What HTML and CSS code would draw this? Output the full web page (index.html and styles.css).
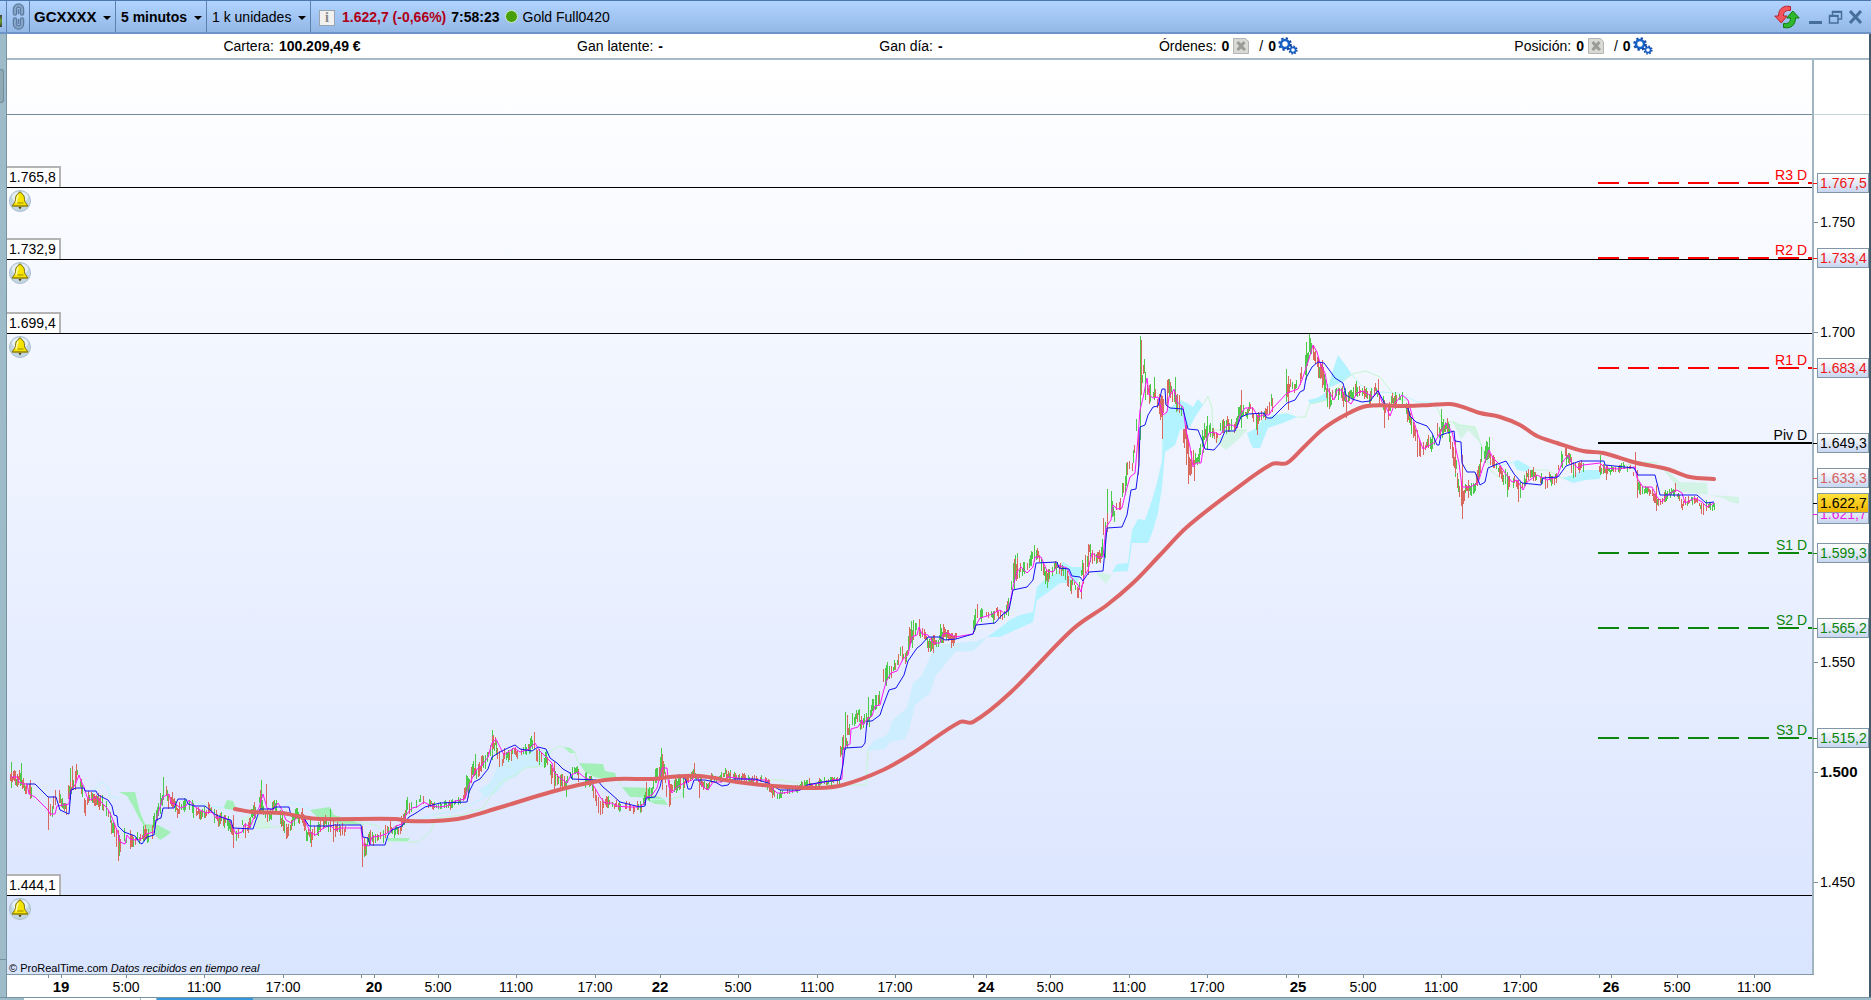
FILE: index.html
```html
<!DOCTYPE html>
<html lang="es">
<head>
    <meta charset="UTF-8">
    <meta name="viewport" content="width=device-width, initial-scale=1.0">
    <title>GCXXXX - 5 minutos</title>
    <link rel="stylesheet" href="styles.css">
</head>
<body>
    <svg class="defs" aria-hidden="true">
        <symbol id="icon-bell" viewBox="0 0 22 22">
            <circle cx="11" cy="11" r="10.5" fill="#c3d6e2" stroke="#a9bfcd"/>
            <ellipse cx="11" cy="7" rx="8" ry="5.500" fill="#e6f0f6"/>
            <path d="M9.500 3.500a1.500 1.500 0 0 1 3 0c2.500 1 3 3.500 3 6 0 2.500 1.500 3.500 3.500 6.500H3c2-3 3.500-4 3.500-6.500 0-2.500.5-5 3-6z" fill="#f5e400" stroke="#7a6b08"/>
            <path d="M9.500 5c-1.500 1.500-1.500 5-2.500 8" fill="none" stroke="#fffcae" stroke-width="1.500"/>
            <path d="M8.500 13h6M3.500 16h15" stroke="#a08c00"/>
            <path d="M9.500 17h3l-1.500 2.500z" fill="#4b3f00"/>
        </symbol>
        <symbol id="icon-cancel" viewBox="0 0 16 16">
            <path d="M.5.5h12l3 3v12H.5z" fill="#d9d9d5" stroke="#b4b4b0"/>
            <path d="M3.500 5l2-2L8 5.500 10.500 3l2 2L10 8l3 3-2 2-3-2.500L5.500 13l-2-2L6 8z" fill="#9b9b98"/>
        </symbol>
        <symbol id="icon-gears" viewBox="0 0 20 18">
            <circle cx="7" cy="7" r="4" fill="none" stroke="#1764c8" stroke-width="2.600"/>
            <circle cx="7" cy="7" r="5.800" fill="none" stroke="#0d47a8" stroke-width="2" stroke-dasharray="2.280 2.280"/>
            <circle cx="15" cy="13" r="2.600" fill="none" stroke="#1764c8" stroke-width="1.600"/>
            <circle cx="15" cy="13" r="3.900" fill="none" stroke="#0b3c9c" stroke-width="1.400" stroke-dasharray="1.530 1.530"/>
        </symbol>
    </svg>

    <header class="titlebar">
        <span class="dock-mark"></span>
        <button class="link-button" aria-label="Vincular ventana">
            <svg width="15" height="27" viewBox="0 0 15 27" fill="none" stroke-linecap="round">
                <path d="M4 10.500V6a3.500 3.500 0 0 1 7 0v4.500M4 16.500V21a3.500 3.500 0 0 0 7 0v-4.500" stroke="#5d7da0" stroke-width="4.500"/>
                <path d="M4 10.500V6a3.500 3.500 0 0 1 7 0v4.500M4 16.500V21a3.500 3.500 0 0 0 7 0v-4.500" stroke="#86a5c8" stroke-width="2"/>
                <path d="M7.500 6.500v4M7.500 16.500v4" stroke="#5d7da0" stroke-width="1.500"/>
            </svg>
        </button>
        <span class="drop drop-symbol"><select aria-label="Valor"><option>GCXXXX</option></select></span>
        <span class="drop drop-bold"><select aria-label="Periodo"><option>5 minutos</option></select></span>
        <span class="drop"><select aria-label="Unidades"><option>1 k unidades</option></select></span>
        <div class="quote">
            <button class="info-button" aria-label="Información">i</button>
            <b class="quote-price">1.622,7 (-0,66%)</b>
            <b>7:58:23</b>
            <span class="status-dot"></span>
            <span>Gold Full0420</span>
        </div>
        <div class="window-buttons">
            <button aria-label="Actualizar">
                <svg width="26" height="24" viewBox="0 0 26 24">
                    <path d="M16.500 1.500C9 0 4.500 4 4.500 11H.8l6.400 7 6-7H9.500c0-4 2-6 7-5.500z" fill="#f4555c" stroke="#b8232e"/>
                    <path d="M9.500 22.500c7.500 1.500 12-2.500 12-9.500h3.700l-6.400-7-6 7h3.700c0 4-2 6-7 5.500z" fill="#2db92b" stroke="#11780f"/>
                </svg>
            </button>
            <button aria-label="Minimizar">
                <svg width="15" height="16" viewBox="0 0 15 16"><path d="M1 13.500h13" stroke="#476f9c" stroke-width="3"/></svg>
            </button>
            <button aria-label="Restaurar">
                <svg width="15" height="16" viewBox="0 0 15 16" fill="none" stroke="#476f9c">
                    <path d="M4.500 6V2.500h9V10H10" stroke-width="1.500"/><path d="M4 3h10" stroke-width="2"/>
                    <path d="M1.500 6.500H10V14H1.500z" stroke-width="1.500"/><path d="M1 7h9" stroke-width="2"/>
                </svg>
            </button>
            <button aria-label="Cerrar">
                <svg width="15" height="16" viewBox="0 0 15 16"><path d="M2 2l11 12M13 2L2 14" stroke="#476f9c" stroke-width="3"/></svg>
            </button>
        </div>
    </header>

    <div class="desktop">
        <aside class="dock"><span class="dock-tab"></span><span class="dock-foot"></span></aside>
        <main class="window">
            <section class="account">
                <div>Cartera: <b>100.209,49 €</b></div>
                <div>Gan latente: <b>-</b></div>
                <div>Gan día: <b>-</b></div>
                <div class="orders">
                    Órdenes: <b>0</b>
                    <button aria-label="Cancelar órdenes"><svg width="16" height="16"><use href="#icon-cancel"/></svg></button>
                    <span class="orders-auto">/ <b>0</b></span>
                    <button aria-label="Sistemas automáticos"><svg width="20" height="18"><use href="#icon-gears"/></svg></button>
                </div>
                <div class="orders">
                    Posición: <b>0</b>
                    <button aria-label="Cerrar posición"><svg width="16" height="16"><use href="#icon-cancel"/></svg></button>
                    <span class="orders-auto">/ <b>0</b></span>
                    <button aria-label="Sistemas en posición"><svg width="20" height="18"><use href="#icon-gears"/></svg></button>
                </div>
            </section>

            <section class="chart">
                <div class="plot" id="plot">
                    <svg class="series" id="series" viewBox="7 60 1805 914" preserveAspectRatio="none" role="img" aria-label="Gráfico de precios"></svg>
                    <p class="credits">© ProRealTime.com <i>Datos recibidos en tiempo real</i></p>
                </div>
                <div class="price-axis" id="priceAxis"></div>
                <div class="time-axis" id="timeAxis"></div>
            </section>
        </main>
    </div>
    <footer class="taskbar"><span class="task task-wide"></span><span class="task"></span><span class="task task-active"></span></footer>

    <script src="chart.js"></script>
</body>
</html>
```
FILE: styles.css
```css
* {
    box-sizing: border-box;
}
body {
    margin: 0;
    min-height: 100vh;
    display: flex;
    flex-direction: column;
    font-family: "Liberation Sans", Arial, sans-serif;
    font-size: 14px;
    color: #000;
    background: #9dbbc8;
}
button, select {
    font: inherit;
    color: inherit;
    border: 0;
    padding: 0;
    background: none;
    cursor: pointer;
}
svg {
    display: block;
}
.defs {
    position: absolute;
    width: 0;
    height: 0;
}

/* title bar */
.titlebar {
    height: 34px;
    display: flex;
    align-items: stretch;
    border-top: 1px solid #4d76aa;
    border-bottom: 2px solid #6d93c8;
    background: linear-gradient(#b0d3ff, #94b8e6);
}
.dock-mark {
    width: 7px;
    border-right: 1px solid #5c80b0;
    background: linear-gradient(#3c3c3c, #6fa22c 50%, #3c3c3c) no-repeat 0 14px / 2px 12px;
}
.link-button {
    width: 23px;
    padding-left: 4px;
    border-right: 1px solid #5c80b0;
}
.drop {
    position: relative;
    display: flex;
    border-right: 1px solid #5c80b0;
}
.drop select {
    appearance: none;
    padding: 0 18px 0 5px;
}
.drop::after {
    content: "";
    position: absolute;
    right: 4px;
    top: 15px;
    border: 4px solid transparent;
    border-top-color: #000;
    border-bottom: 0;
    pointer-events: none;
}
.drop-symbol select {
    font-size: 15px;
    padding-left: 4px;
}
.drop-symbol select,
.drop-bold select {
    font-weight: bold;
}
.quote {
    display: flex;
    align-items: center;
    gap: 5px;
    padding: 0 0 0 8px;
}
.quote-price {
    color: #b00018;
}
.info-button {
    width: 16px;
    height: 16px;
    margin: 2px 2px 0 0;
    border: 1px solid #9aa4ae;
    background: #f1f1ef;
    color: #85888c;
    font: bold 14px/14px "Liberation Serif", serif;
}
.status-dot {
    width: 13px;
    height: 13px;
    border: 1px solid #d7ecc8;
    border-radius: 50%;
    background: #48a008;
}
.window-buttons {
    display: flex;
    align-items: center;
    gap: 5px;
    margin-left: auto;
    padding: 0 8px 0 0;
}
.window-buttons button:first-child {
    margin-right: 3px;
}

/* body of the desktop */
.desktop {
    flex: 1;
    display: flex;
}
.dock {
    width: 7px;
    display: flex;
    flex-direction: column;
    border-right: 1px solid #7693a2;
}
.dock-tab {
    width: 4px;
    height: 34px;
    margin-top: 35px;
    border: 1px solid #6f8d9c;
    border-left: 0;
    border-radius: 0 3px 3px 0;
    background: #8fa9b5;
}
.dock-foot {
    height: 38px;
    margin-top: auto;
    border-top: 1px solid #7693a2;
}
.window {
    flex: 1;
    display: flex;
    flex-direction: column;
    border-right: 2px solid #425a69;
    background: #fff;
}
.account {
    height: 26px;
    display: flex;
    justify-content: space-evenly;
    align-items: center;
    padding-bottom: 1px;
    border-bottom: 2px solid #a7bbc7;
    background: #fff;
}
.account b {
    margin-left: 1px;
}
.orders {
    display: flex;
    align-items: center;
    gap: 4px;
}
.orders-auto {
    margin-left: 6px;
}
.orders-auto + button {
    margin-left: -2px;
}

/* chart */
.chart {
    flex: 1;
    display: grid;
    grid-template-columns: 1fr 55px;
    grid-template-rows: 1fr 23px;
}
.plot {
    position: relative;
    border-right: 2px solid #a2b4bf;
    background: linear-gradient(#fff, #d9e4ff);
}
.series {
    position: absolute;
    inset: 0;
    width: 100%;
    height: 100%;
}
.candles {
    stroke-width: 1;
    fill: none;
    shape-rendering: crispEdges;
}
.candles-up {
    stroke: #4cca4c;
}
.candles-down {
    stroke: #d9695f;
}
.line {
    fill: none;
    stroke-linejoin: round;
}
.line-fast {
    stroke: #ff14f5;
}
.line-base {
    stroke: #1414f0;
}
.line-average {
    stroke: #dd6464;
    stroke-width: 4;
    stroke-linecap: round;
}
.line-span-a {
    stroke: #bdf6fb;
}
.line-span-b {
    stroke: #c4f6cf;
}
.cloud-cyan {
    fill: #b2f3ff;
}
.cloud-sky {
    fill: #cdeeff;
}
.cloud-green {
    fill: #a2efb8;
}
.cloud-pale {
    fill: #d2f3e6;
}
.panel-line {
    stroke: #758c9b;
}
.alert {
    position: absolute;
    left: 0;
    right: 0;
    border-top: 1px solid #000;
}
.alert-price {
    position: absolute;
    left: 0;
    bottom: 1px;
    padding: 1px 3px 1px 2px;
    line-height: 17px;
    border-top: 2px solid #b4b4b4;
    border-right: 2px solid #b4b4b4;
    background: #fff;
}
.alert-bell {
    position: absolute;
    left: 2px;
    top: 2px;
}
.pivot {
    position: absolute;
    left: 88.140%;
    right: 0;
    height: 2px;
    margin-top: -1px;
    color: #000;
    background: currentColor;
}
.pivot-label {
    position: absolute;
    right: 5px;
    bottom: 1px;
    line-height: 16px;
}
.pivot-r {
    color: #f00;
}
.pivot-s {
    color: #0a860a;
}
.pivot-r,
.pivot-s {
    background: repeating-linear-gradient(90deg, currentColor 0 21px, transparent 21px 30px);
}
.credits {
    position: absolute;
    left: 2px;
    bottom: 0;
    margin: 0;
    font-size: 11px;
    line-height: 11px;
}
.price-axis {
    position: relative;
    background: linear-gradient(#c5d6de, #c5d6de) no-repeat 0 54px / 100% 1px;
}
.price-tick,
.price-tag {
    position: absolute;
    left: 3px;
    transform: translateY(-50%);
    line-height: 18px;
}
.price-tick::before,
.price-tag::before {
    content: "";
    position: absolute;
    left: -3px;
    top: 50%;
    width: 4px;
    border-top: 1px solid #758c9b;
}
.price-tick {
    padding-left: 3px;
}
.price-tick-major {
    font-size: 15px;
    font-weight: bold;
}
.price-tag {
    right: 0;
    padding-left: 2px;
    border: 1px solid #8197a5;
    background: linear-gradient(#fff, #c8d6f0);
}
.price-tag::before {
    left: -5px;
    border-top-color: currentColor;
}
.tag-r {
    color: #f01414;
}
.tag-s {
    color: #0a860a;
}
.tag-average {
    color: #d96060;
}
.tag-fast {
    color: #f01be6;
}
.tag-last {
    background: linear-gradient(#ffe23c, #f0b400);
}
.time-axis {
    position: relative;
    border-top: 1px solid #8299a5;
}
.time-tick {
    position: absolute;
    top: 0;
    height: 3px;
    border-left: 1px solid #758c9b;
}
.time-label {
    position: absolute;
    top: 4px;
    line-height: 16px;
    transform: translateX(-50%);
}
.time-label-day {
    font-size: 15px;
    font-weight: bold;
}

/* strip of the task bar that shows below the window */
.taskbar {
    height: 3px;
    display: flex;
    gap: 1px;
    padding-left: 24px;
    border-top: 1px solid #7693a2;
}
.task {
    width: 15px;
    background: #fff;
}
.task-wide {
    width: 116px;
}
.task-active {
    width: 96px;
    background: #3598dc;
}
```
FILE: chart.js
```js
const SVG_NS = 'http://www.w3.org/2000/svg';
const TOP_PRICE = 1823.5;   // price at the upper edge of the plot
const PRICE_RANGE = 415.45; // price units from top to bottom

const FAST = '11,777 17,777 19,782 24,784 27,784 29,794 35,797 41,803 48,810 50,814 55,814 57,806 69,804 70,793 73,788 76,783 79,775 81,781 84,787 87,797 91,800 95,797 99,800 107,808 110,813 115,825 118,833 120,842 125,844 127,835 130,839 135,840 141,839 146,834 154,832 157,817 160,807 163,797 169,794 171,803 176,804 180,808 186,806 189,800 194,806 200,810 206,813 212,812 216,818 224,817 229,820 233,828 236,834 242,832 245,824 250,827 253,820 256,813 259,808 263,794 267,808 273,810 278,803 282,810 286,820 291,823 298,817 303,818 306,823 311,833 316,835 322,829 330,825 335,830 341,828 347,828 361,828 363,845 369,846 372,837 380,836 386,834 391,830 396,826 402,824 406,815 412,808 417,807 424,802 431,806 439,807 447,806 455,801 465,799 469,785 476,770 482,765 488,757 492,743 496,739 499,745 504,755 508,752 514,748 520,752 527,750 531,747 535,743 539,750 547,758 552,763 554,772 559,777 563,780 567,783 571,775 578,772 584,777 590,780 595,788 600,797 605,803 612,803 617,806 628,807 638,807 644,804 647,797 652,795 657,788 659,780 662,768 667,768 669,787 672,793 675,789 680,785 687,782 692,780 695,776 699,780 703,787 708,790 713,782 722,782 728,777 737,778 753,780 767,780 772,788 777,793 783,793 800,790 808,785 820,783 833,780 842,779 843,750 846,746 850,744 851,729 858,727 862,720 863,725 867,719 872,716 875,706 880,705 883,693 886,682 891,673 897,671 903,659 908,655 912,637 917,635 919,627 922,634 928,635 933,643 940,643 943,634 948,633 955,637 973,634 975,627 980,618 987,616 992,614 1000,610 1005,614 1010,603 1013,587 1017,572 1021,567 1027,573 1033,567 1035,557 1041,557 1047,571 1053,572 1058,565 1067,568 1071,577 1078,585 1081,592 1084,577 1088,570 1092,553 1097,557 1103,557 1106,527 1111,520 1113,505 1117,509 1122,508 1125,495 1130,477 1135,473 1137,450 1140,410 1143,398 1147,378 1149,395 1153,398 1158,397 1163,415 1167,412 1169,397 1174,389 1177,402 1183,407 1186,430 1190,447 1193,467 1196,463 1201,463 1203,450 1209,433 1214,432 1220,435 1227,425 1232,425 1237,428 1240,415 1245,408 1253,408 1258,417 1263,415 1269,415 1273,408 1287,393 1298,389 1302,380 1308,362 1313,345 1317,352 1320,363 1325,373 1328,390 1334,400 1337,390 1342,390 1346,400 1351,404 1357,393 1363,391 1373,397 1378,390 1382,402 1386,407 1390,416 1395,403 1402,395 1408,400 1412,415 1417,432 1423,449 1430,445 1435,442 1440,433 1446,423 1452,432 1455,445 1459,463 1462,487 1470,487 1478,483 1483,467 1489,450 1493,458 1500,465 1505,473 1512,482 1517,480 1523,490 1527,482 1537,475 1547,480 1557,477 1562,463 1568,455 1572,463 1578,468 1583,465 1600,463 1605,468 1617,469 1635,467 1637,478 1643,487 1652,487 1657,497 1662,502 1667,495 1677,490 1682,493 1685,503 1695,498 1702,502 1707,507 1714,503';

const BASE = '27,784 35,784 48,797 56,797 60,810 69,814 71,790 76,788 84,788 85,791 96,791 98,795 108,800 112,806 114,815 117,816 118,826 124,832 135,836 139,842 142,844 147,837 154,835 156,820 161,818 163,808 174,808 178,799 186,799 188,804 195,806 205,806 216,815 226,819 231,820 233,828 253,829 256,820 260,809 272,809 276,807 289,807 291,816 304,818 309,826 330,826 334,825 361,825 363,837 368,838 370,845 385,845 388,835 392,830 402,826 409,817 416,813 425,807 440,803 467,802 469,792 474,782 480,779 488,769 492,757 500,752 508,748 515,745 520,749 532,751 538,747 546,749 550,758 557,763 563,769 570,773 572,779 597,780 603,787 610,793 620,802 640,807 645,806 646,798 655,797 660,787 662,778 680,775 686,780 688,789 691,789 694,780 705,780 715,782 722,786 728,785 733,779 755,779 768,783 780,790 800,790 807,785 822,782 840,780 843,765 845,748 862,747 865,743 867,721 872,721 880,715 883,706 889,690 896,688 904,675 908,661 917,648 921,645 928,637 940,637 945,640 956,639 973,634 976,625 995,623 1002,615 1009,610 1013,590 1027,587 1033,580 1036,563 1057,562 1059,568 1069,569 1072,576 1080,577 1083,581 1089,572 1103,571 1105,550 1107,528 1122,527 1127,515 1131,490 1136,489 1139,465 1140,427 1145,425 1148,415 1153,407 1158,406 1162,389 1165,389 1166,405 1170,408 1183,409 1188,429 1198,430 1202,440 1205,449 1214,450 1220,443 1225,431 1235,431 1241,417 1248,414 1264,413 1267,418 1272,418 1287,403 1295,400 1300,392 1304,390 1306,378 1312,367 1318,362 1324,363 1330,371 1335,378 1343,383 1346,395 1352,399 1362,402 1370,401 1378,391 1385,404 1408,408 1410,416 1416,422 1427,426 1432,433 1437,445 1439,445 1441,435 1447,433 1454,431 1455,441 1461,442 1462,463 1467,472 1475,472 1480,485 1485,482 1488,468 1495,465 1506,461 1514,474 1522,483 1541,485 1543,478 1558,477 1566,466 1580,461 1604,461 1605,465 1634,468 1638,475 1655,475 1660,495 1697,495 1706,503 1714,502';

const AVERAGE = '235,809 253,812 282,813 302,817 320,819 396,819 408,821 435,821 463,818 498,808 551,792 588,783 616,779 653,779 670,777 700,776 737,782 773,786 817,788 843,785 883,770 913,753 960,722 973,722 1010,693 1073,629 1107,605 1133,583 1160,555 1187,527 1233,491 1272,464 1287,463 1303,448 1323,429 1347,414 1367,406 1408,406 1430,405 1450,404 1463,407 1480,413 1500,417 1520,425 1537,436 1557,443 1583,451 1603,453 1637,463 1667,469 1690,477 1714,479';

const CLOUDS = [
    ['green', '119,792 135,792 140,812 145,824 158,825 171,832 165,837 160,840 154,834 146,830 139,818 133,806 127,796'],
    ['green', '224,807 227,800 233,801 237,810 225,809'],
    ['green', '310,810 330,807 334,815 345,818 365,825 340,824 318,818'],
    ['pale', '240,818 258,814 272,824 268,829 256,828'],
    ['green', '384,838 410,838 408,841 388,841'],
    ['sky', '478,790 490,783 496,770 502,755 508,752 530,750 552,750 543,766 525,768 518,775 505,782 497,793 486,797'],
    ['green', '563,747 570,748 576,753 570,753'],
    ['green', '579,763 603,764 605,771 615,773 617,779 597,778 585,772'],
    ['green', '622,787 651,788 653,795 663,798 668,805 655,804 647,800 638,797 630,797'],
    ['sky', '868,748 875,740 887,735 893,720 907,708 913,683 922,675 930,657 935,645 977,641 987,637 980,645 973,651 955,652 943,667 935,677 930,693 915,705 910,727 905,739 890,742 885,749 868,751'],
    ['cyan', '987,637 1000,628 1010,620 1020,615 1033,612 1037,587 1047,577 1057,573 1063,562 1072,567 1083,567 1077,583 1060,583 1047,593 1037,600 1033,622 1013,631 1000,637'],
    ['pale', '1095,572 1112,575 1106,584 1100,578'],
    ['cyan', '1112,572 1117,564 1128,563 1132,530 1138,519 1145,520 1152,500 1157,483 1162,460 1163,417 1167,410 1180,400 1187,403 1193,407 1198,399 1203,405 1195,417 1190,427 1180,430 1175,445 1165,452 1162,487 1158,513 1153,530 1148,543 1132,543 1128,571'],
    ['pale', '1214,440 1232,430 1247,430 1240,438 1226,450'],
    ['cyan', '1247,433 1257,428 1262,420 1273,415 1287,413 1297,417 1283,423 1268,428 1260,448 1253,448 1250,442'],
    ['cyan', '1308,400 1317,398 1327,392 1332,373 1338,355 1347,367 1352,375 1340,383 1328,388 1327,400 1318,403 1310,404'],
    ['pale', '1452,420 1460,425 1475,427 1480,443 1468,430 1461,440'],
    ['cyan', '1513,462 1518,460 1530,467 1527,472 1517,470'],
    ['cyan', '1562,478 1573,475 1582,470 1602,470 1600,479 1585,480 1573,483'],
    ['pale', '1658,463 1670,473 1680,482 1707,483 1708,495 1727,496 1739,497 1739,504 1730,502 1723,498 1703,494 1680,492 1673,482']
];

const SPAN_A = [
    '84,806 88,803 92,795 96,788 102,782 108,787 110,797 119,798',
    '186,800 195,802 210,806 224,808',
    '280,810 290,802 302,805 310,810',
    '386,836 400,826 432,815 460,810 472,804 483,798 490,783',
    '640,797 652,800 676,798',
    '1163,417 1163,452',
    '1352,375 1362,386 1380,392 1398,393 1417,402 1430,402 1437,408',
    '1480,443 1488,462 1500,466 1513,462'
];
const SPAN_B = [
    '256,828 275,827 290,824 318,818',
    '345,818 378,826 388,841 418,842 430,832 436,818 462,815 470,812 483,808 490,797 500,783 515,775 525,768 543,766 552,750 560,746 575,753 578,763',
    '617,779 622,787',
    '668,800 675,798 682,796 684,785',
    '760,779 780,780 798,783 850,785 866,785 868,750',
    '1203,405 1208,396 1212,408 1213,430 1247,430',
    '1297,417 1305,417 1310,404 1327,400 1345,380 1352,374 1366,371 1380,377 1390,390 1400,400 1408,400',
    '1437,408 1442,419 1460,425 1475,427 1483,450 1490,470 1500,478',
    '1530,470 1547,470 1562,478',
    '1602,470 1640,462 1658,463'
];

// x, high, low, direction
const SPIKES = [
    [11, 762, 788, 'up'], [21, 763, 785, 'up'], [48, 797, 830, 'down'], [70, 768, 800, 'up'], [72, 766, 790, 'down'],
    [85, 800, 816, 'down'], [118, 830, 861, 'down'], [130, 830, 849, 'down'], [163, 777, 800, 'up'], [233, 815, 848, 'down'],
    [261, 780, 812, 'up'], [266, 784, 806, 'down'], [310, 820, 843, 'up'], [330, 809, 828, 'up'], [333, 820, 842, 'down'],
    [362, 826, 867, 'down'], [364, 838, 857, 'up'], [475, 754, 775, 'up'], [492, 730, 760, 'up'], [534, 732, 748, 'down'],
    [554, 762, 791, 'down'], [566, 780, 797, 'up'], [646, 782, 798, 'down'], [661, 748, 780, 'up'], [662, 754, 790, 'down'],
    [669, 780, 807, 'down'], [683, 778, 798, 'up'], [694, 763, 778, 'down'], [699, 780, 798, 'down'], [730, 770, 780, 'up'],
    [845, 712, 750, 'up'], [847, 715, 735, 'down'], [868, 697, 722, 'up'], [913, 620, 640, 'up'], [919, 619, 636, 'down'],
    [933, 635, 653, 'down'], [943, 624, 636, 'down'], [975, 609, 630, 'up'], [1014, 560, 590, 'up'], [1017, 553, 575, 'up'],
    [1034, 545, 562, 'up'], [1081, 585, 599, 'down'], [1088, 544, 575, 'down'], [1105, 522, 558, 'up'], [1107, 489, 530, 'up'],
    [1138, 430, 475, 'down'], [1140, 336, 440, 'up'], [1141, 340, 395, 'down'], [1145, 372, 400, 'up'], [1154, 377, 400, 'up'],
    [1162, 400, 439, 'down'], [1167, 380, 405, 'down'], [1175, 377, 395, 'up'], [1186, 425, 465, 'down'], [1188, 440, 484, 'down'],
    [1194, 460, 481, 'down'], [1207, 416, 450, 'up'], [1241, 390, 412, 'down'], [1257, 415, 435, 'down'], [1286, 369, 402, 'up'],
    [1288, 376, 410, 'down'], [1306, 342, 380, 'up'], [1309, 334, 352, 'up'], [1313, 345, 360, 'down'], [1322, 360, 388, 'down'],
    [1329, 388, 409, 'down'], [1346, 395, 418, 'down'], [1378, 379, 395, 'down'], [1384, 400, 428, 'down'], [1417, 430, 457, 'down'],
    [1441, 409, 430, 'up'], [1455, 440, 473, 'down'], [1462, 455, 519, 'down'], [1468, 480, 498, 'down'], [1489, 437, 458, 'up'],
    [1507, 472, 497, 'up'], [1518, 480, 502, 'down'], [1566, 446, 465, 'up'], [1600, 455, 475, 'up'], [1606, 465, 480, 'down'],
    [1635, 452, 470, 'down'], [1637, 470, 498, 'down'], [1656, 485, 511, 'down'], [1675, 483, 492, 'down'], [1706, 500, 511, 'up']
];

// market closed, no bars
const CLOSED = [[33, 47], [347, 360], [957, 972], [1273, 1284], [1584, 1598]];

const ALERTS = [['1.765,8', 1765.8], ['1.732,9', 1732.9], ['1.699,4', 1699.4], ['1.444,1', 1444.1]];
const PIVOTS = [
    ['R3 D', 1767.5, 'r'], ['R2 D', 1733.4, 'r'], ['R1 D', 1683.4, 'r'], ['Piv D', 1649.3, ''],
    ['S1 D', 1599.3, 's'], ['S2 D', 1565.2, 's'], ['S3 D', 1515.2, 's']
];
const PRICE_TICKS = [['1.750', 1750], ['1.700', 1700], ['1.550', 1550], ['1.500', 1500], ['1.450', 1450]];
const PRICE_TAGS = [
    ['1.767,5', 1767.5, 'r'], ['1.733,4', 1733.4, 'r'], ['1.683,4', 1683.4, 'r'], ['1.649,3', 1649.3, ''],
    ['1.633,3', 1633.3, 'average'], ['1.621,7', 1617, 'fast'], ['1.622,7', 1622.2, 'last'],
    ['1.599,3', 1599.3, 's'], ['1.565,2', 1565.2, 's'], ['1.515,2', 1515.2, 's']
];
const TIMES = [
    [48, ''], [61, '19'], [126, '5:00'], [204, '11:00'], [283, '17:00'], [361, ''], [374, '20'], [438, '5:00'],
    [516, '11:00'], [595, '17:00'], [660, '22'], [738, '5:00'], [817, '11:00'], [895, '17:00'], [973, ''], [986, '24'],
    [1050, '5:00'], [1129, '11:00'], [1207, '17:00'], [1286, ''], [1298, '25'], [1363, '5:00'], [1441, '11:00'],
    [1520, '17:00'], [1599, ''], [1611, '26'], [1677, '5:00'], [1754, '11:00']
];

const plot = document.getElementById('plot');
const series = document.getElementById('series');
const priceAxis = document.getElementById('priceAxis');
const timeAxis = document.getElementById('timeAxis');

function priceTop(price) {
    return ((TOP_PRICE - price) / PRICE_RANGE * 100) + '%';
}

function parsePoints(text) {
    return text.split(' ').map(p => p.split(',').map(Number));
}

function addShape(name, attrs) {
    const el = document.createElementNS(SVG_NS, name);
    for (const key in attrs) el.setAttribute(key, attrs[key]);
    series.appendChild(el);
}

function addLabel(parent, className, text, prop, value) {
    const el = document.createElement('span');
    el.className = className;
    el.textContent = text;
    if (prop) el.style[prop] = value;
    parent.appendChild(el);
    return el;
}

// curve through all the points
function smoothPath(points) {
    let d = 'M' + points[0];
    for (let i = 0; i < points.length - 1; i++) {
        const a = points[i - 1] || points[i];
        const b = points[i];
        const c = points[i + 1];
        const e = points[i + 2] || c;
        const k = (c[0] - b[0]) / 3;
        const slopeB = (c[1] - a[1]) / (c[0] - a[0]);
        const slopeC = (e[1] - b[1]) / (e[0] - b[0]);
        d += `C${b[0] + k} ${b[1] + k * slopeB} ${c[0] - k} ${c[1] - k * slopeC} ${c}`;
    }
    return d;
}

function drawCandles() {
    const points = parsePoints(FAST);
    const paths = { up: '', down: '' };
    let seed = 7;
    const random = () => (seed = (seed * 16807) % 2147483647) / 2147483647;
    const yAt = x => {
        let i = 1;
        while (i < points.length - 1 && points[i][0] < x) i++;
        const [x0, y0] = points[i - 1], [x1, y1] = points[i];
        return y0 + (y1 - y0) * Math.min(1, Math.max(0, (x - x0) / (x1 - x0)));
    };
    let drift = 0;
    for (let x = 9; x < 1716; x++) {
        if (CLOSED.some(([from, to]) => x >= from && x <= to)) continue;
        if (random() < 0.3) continue;
        const next = yAt(Math.min(x + 3, 1714));
        const slope = Math.abs(next - yAt(x - 3));
        const calm = (x > 685 && x < 842) || x > 1600 || (x > 415 && x < 465);
        const size = (calm ? 4 : 6) + Math.min(slope * 0.3, 6);
        drift = drift * 0.75 + (random() - 0.5) * size * 0.9;
        const mid = next + drift;
        const up = Math.round(mid - size * (0.2 + random() * 0.9));
        const low = Math.round(mid + size * (0.2 + random() * 0.9));
        const dir = random() < (next < yAt(x - 3) ? 0.66 : 0.34) ? 'up' : 'down';
        paths[dir] += `M${x + 0.5} ${up}V${low}`;
    }
    SPIKES.forEach(([x, high, low, dir]) => {
        paths[dir] += `M${x + 0.5} ${high}V${low}`;
    });
    addShape('path', { class: 'candles candles-up', d: paths.up });
    addShape('path', { class: 'candles candles-down', d: paths.down });
}

addShape('path', { class: 'panel-line', d: 'M7 114.5H1812' });
CLOUDS.forEach(([tone, points]) => addShape('polygon', { class: 'cloud-' + tone, points }));
SPAN_A.forEach(points => addShape('polyline', { class: 'line line-span-a', points }));
SPAN_B.forEach(points => addShape('polyline', { class: 'line line-span-b', points }));
drawCandles();
addShape('polyline', { class: 'line line-fast', points: FAST });
addShape('polyline', { class: 'line line-base', points: BASE });
addShape('path', { class: 'line line-average', d: smoothPath(parsePoints(AVERAGE)) });

ALERTS.forEach(([text, price]) => {
    const row = addLabel(plot, 'alert', '', 'top', priceTop(price));
    addLabel(row, 'alert-price', text);
    row.insertAdjacentHTML('beforeend', '<svg class="alert-bell" width="22" height="22"><use href="#icon-bell"/></svg>');
});

PIVOTS.forEach(([text, price, kind]) => {
    const row = addLabel(plot, 'pivot pivot-' + kind, '', 'top', priceTop(price));
    addLabel(row, 'pivot-label', text);
});

PRICE_TICKS.forEach(([text, price]) => {
    addLabel(priceAxis, 'price-tick' + (price === 1500 ? ' price-tick-major' : ''), text, 'top', priceTop(price));
});
PRICE_TAGS.forEach(([text, price, kind]) => {
    addLabel(priceAxis, 'price-tag tag-' + kind, text, 'top', priceTop(price));
});

TIMES.forEach(([x, text]) => {
    const left = ((x - 7) / 1807 * 100) + '%';
    addLabel(timeAxis, 'time-tick', '', 'left', left);
    if (text) addLabel(timeAxis, 'time-label' + (text.includes(':') ? '' : ' time-label-day'), text, 'left', left);
});
```
